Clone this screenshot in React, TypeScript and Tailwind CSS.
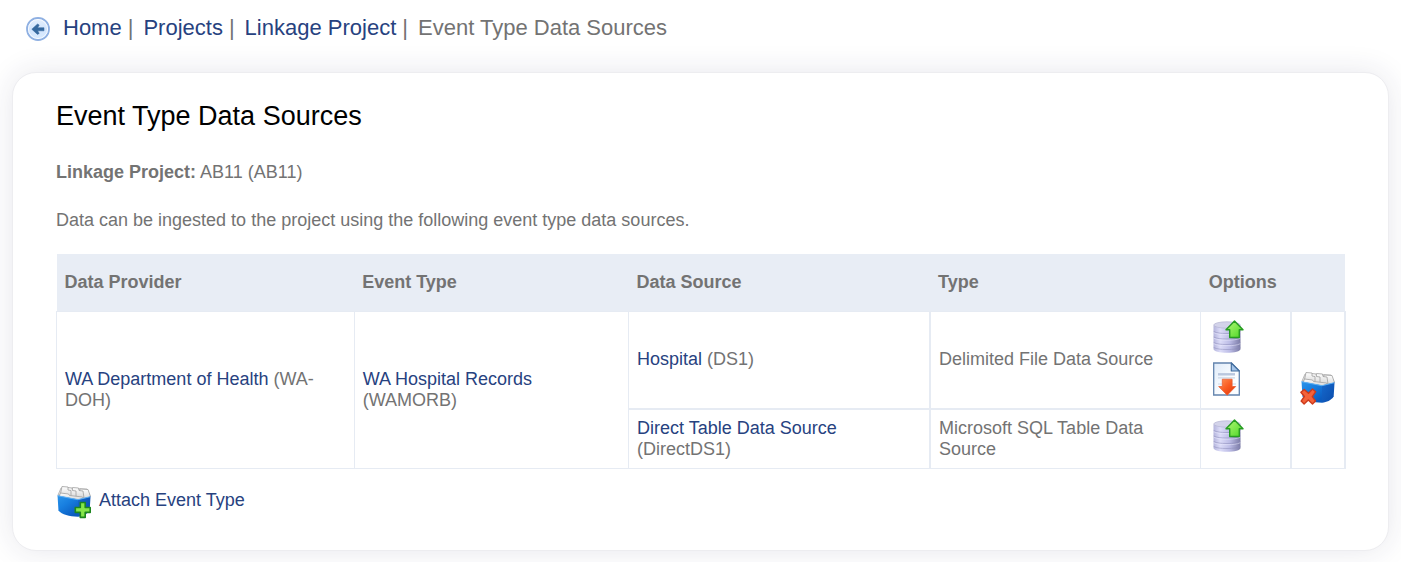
import React from "react";

const link = "text-[#27427f] hover:underline";
const cell = "border border-[#e6ebf3] px-2 py-2 text-left align-middle";

function BackIcon() {
  return (
    <svg viewBox="0 0 24 24" className="size-6" aria-hidden="true">
      <defs>
        <linearGradient id="back-fill" x1="0" y1="0" x2="0" y2="1">
          <stop offset="0" stopColor="#e6f0fd" />
          <stop offset="0.5" stopColor="#d3e5fd" />
          <stop offset="1" stopColor="#d9ebff" />
        </linearGradient>
      </defs>
      <circle cx="12" cy="12" r="11" fill="url(#back-fill)" stroke="#8fb0e2" strokeWidth="1.8" />
      <circle cx="12" cy="12" r="9.6" fill="none" stroke="#fff" strokeOpacity="0.8" />
      <path d="M5.800 12.200 11.500 7l1.700 1-1.500 2.700H18v3.100h-6.300l1.500 2.600-1.700 1z" fill="#36699f" stroke="#36699f" strokeWidth="0.5" strokeLinejoin="round" />
    </svg>
  );
}

function DatabaseUploadIcon() {
  return (
    <svg viewBox="0 0 34 34" className="size-[34px]" aria-hidden="true">
      <defs>
        <linearGradient id="db-side" x1="0" y1="0" x2="1" y2="0">
          <stop offset="0" stopColor="#b4b4dc" />
          <stop offset="0.25" stopColor="#dcdcf8" />
          <stop offset="0.6" stopColor="#bcbce6" />
          <stop offset="1" stopColor="#7b7ba6" />
        </linearGradient>
        <linearGradient id="db-arrow" x1="0" y1="0" x2="1" y2="1">
          <stop offset="0" stopColor="#b4fa78" />
          <stop offset="1" stopColor="#4bd524" />
        </linearGradient>
      </defs>
      <path d="M1.500 5.500V29c0 2.300 6 3.700 13.500 3.700S28.500 31.300 28.500 29V5.500z" fill="url(#db-side)" />
      <ellipse cx="15" cy="5" rx="13.300" ry="3.200" fill="#d3d3ea" stroke="#b4b4d2" strokeWidth="0.7" />
      <g fill="none" stroke="#8a8ab8" strokeWidth="1" opacity="0.5">
        <path d="M1.700 11.500c3 1.500 7 2 13.300 2s10.300-.5 13.300-2" />
        <path d="M1.700 17c3 1.500 7 2 13.300 2s10.300-.5 13.300-2" />
        <path d="M1.700 22.500c3 1.500 7 2 13.300 2s10.300-.5 13.300-2" />
        <path d="M1.700 27.500c3 1.500 7 2 13.300 2s10.300-.5 13.300-2" />
      </g>
      <g fill="none" stroke="#ededff" strokeWidth="1" opacity="0.5">
        <path d="M1.700 12.700c3 1.500 7 2 13.300 2s10.300-.5 13.300-2" />
        <path d="M1.700 18.200c3 1.500 7 2 13.300 2s10.300-.5 13.300-2" />
        <path d="M1.700 23.700c3 1.500 7 2 13.300 2s10.300-.5 13.300-2" />
      </g>
      <path d="M22.500 1 31 9.700h-3.700v7.800h-9.600V9.700H14z" fill="url(#db-arrow)" stroke="#279c22" strokeWidth="1.400" strokeLinejoin="round" />
    </svg>
  );
}

function FileDownloadIcon() {
  return (
    <svg viewBox="0 0 34 34" className="size-[34px]" aria-hidden="true">
      <defs>
        <linearGradient id="page-fill" x1="0" y1="0" x2="1" y2="1">
          <stop offset="0" stopColor="#dfebf9" />
          <stop offset="0.6" stopColor="#fbfdff" />
        </linearGradient>
        <linearGradient id="page-arrow" x1="0" y1="0" x2="1" y2="1">
          <stop offset="0" stopColor="#ff9457" />
          <stop offset="0.5" stopColor="#f95920" />
          <stop offset="1" stopColor="#dc3508" />
        </linearGradient>
      </defs>
      <path d="M1.700 1h17.600l8 8v24H1.700z" fill="url(#page-fill)" stroke="#6283ad" strokeWidth="1.300" />
      <path d="M19.300 1v8h8z" fill="#a4c4e9" stroke="#446f9f" strokeWidth="1.200" strokeLinejoin="round" />
      <path d="M6 12.300h17" stroke="#b9c7de" strokeWidth="2.400" />
      <path d="M6 15.800h17M6 22h4M20 22h4" stroke="#ccd7e8" strokeWidth="1.200" />
      <path d="M10.300 17.200h9.800v7.300h3.600L15.200 33.200 6.700 24.500h3.600z" fill="url(#page-arrow)" stroke="#e85d32" strokeWidth="0.8" strokeLinejoin="round" />
    </svg>
  );
}

function BoxIcon({ badge }: { badge: "add" | "remove" }) {
  return (
    <svg viewBox="0 0 36 34" className="h-[34px] w-9" aria-hidden="true">
      <defs>
        <linearGradient id="box-front" x1="0" y1="0" x2="0.700" y2="1">
          <stop offset="0" stopColor="#2b94ea" />
          <stop offset="0.45" stopColor="#187fe0" />
          <stop offset="1" stopColor="#0b5cc0" />
        </linearGradient>
        <linearGradient id="box-end" x1="0" y1="0" x2="1" y2="1">
          <stop offset="0" stopColor="#1568cc" />
          <stop offset="1" stopColor="#0a4cab" />
        </linearGradient>
        <linearGradient id="box-paper" x1="0" y1="0" x2="0" y2="1">
          <stop offset="0" stopColor="#fff" />
          <stop offset="1" stopColor="#d6d6d6" />
        </linearGradient>
      </defs>
      <path d="M2 10 5 3l26 1 3 7-12 4z" fill="#e4e4e4" stroke="#a5a5a5" strokeWidth="0.7" />
      <g fill="url(#box-paper)" stroke="#a0a0a0" strokeWidth="0.8">
        <path d="m22 13 2-9 8 .5 2.500 7-6 3z" />
        <path d="m15 12 1.500-9.500 6 .5.500 2.500 4 .5 1 7z" />
        <path d="M10 11 11 2.500l5 .5.500 2.500 3.500.5v7z" />
        <path d="M4 11 6 1.500l6 .5v3l3 .5v7z" />
        <path d="M3 11.500 4.500 8l8 1 1 1.500 13 1.500 1 2-6 .8z" />
      </g>
      <path d="m1.500 10.500 20.500 4v17.200C13 31.500 6 29.500 2.500 25.500z" fill="url(#box-front)" />
      <path d="m22 14.500 12.500-3-.8 14c-2.700 4-7 5.700-11.700 6.200z" fill="url(#box-end)" />
      <path d="m1.500 10.700 20.500 4 12.300-3" fill="none" stroke="#5db0f5" strokeWidth="1" />
      {badge === "add" ? (
        <path d="M24.300 17.500h4.900v5h5v4.900h-5v5h-4.900v-5h-5v-4.900h5z" fill="#86e64a" stroke="#1d861f" strokeWidth="1.600" strokeLinejoin="round" />
      ) : (
        <path d="m4.200 18.500 4.300 3.700 4-4.200 3.200 2.700-3.400 5 3.200 4.300-3 2.900-4.200-3.900-4.200 4-3-2.900 3.300-4.600-3.500-4.300z" fill="#f4623a" stroke="#cc3a1c" strokeWidth="1.400" strokeLinejoin="round" />
      )}
    </svg>
  );
}

function Separator() {
  return <span aria-hidden="true" className="ml-[6px] mr-[10px]">|</span>;
}

export default function App() {
  return (
    <div className="bg-white px-3 pb-3 font-['Liberation_Sans',Arial,sans-serif] text-[18px] leading-[21px] text-[#737373]">
      <nav aria-label="Breadcrumb" className="flex h-[72px] items-start pl-[14px] pt-[14px] text-[22px] leading-7">
        <a href="#back" aria-label="Back" className="mr-[13px] mt-[3px] shrink-0">
          <BackIcon />
        </a>
        <a href="#home" className={link}>Home</a>
        <Separator />
        <a href="#projects" className={link}>Projects</a>
        <Separator />
        <a href="#linkage-project" className={link}>Linkage Project</a>
        <Separator />
        <span aria-current="page">Event Type Data Sources</span>
      </nav>

      <main className="rounded-[24px] border border-[#ededf0] bg-white pb-[26px] pl-[43px] pr-[42px] pt-[27px] shadow-[0_0_30px_rgba(40,40,80,0.11)]">
        <h1 className="text-[27px] leading-8 text-black">Event Type Data Sources</h1>
        <p className="mt-[30px]">
          <strong>Linkage Project:</strong> AB11 (AB11)
        </p>
        <p className="mt-[27px]">
          Data can be ingested to the project using the following event type data sources.
        </p>

        <table className="mt-[23px] w-full table-fixed border-collapse">
          <colgroup>
            <col className="w-[23.1%]" />
            <col className="w-[21.3%]" />
            <col className="w-[23.4%]" />
            <col className="w-[21%]" />
            <col className="w-[7%]" />
            <col className="w-[4.200%]" />
          </colgroup>
          <thead>
            <tr className="h-[57px] bg-[#e8edf5]">
              <th scope="col" className="px-2 text-left">Data Provider</th>
              <th scope="col" className="px-2 text-left">Event Type</th>
              <th scope="col" className="px-2 text-left">Data Source</th>
              <th scope="col" className="px-2 text-left">Type</th>
              <th scope="col" colSpan={2} className="px-2 text-left">Options</th>
            </tr>
          </thead>
          <tbody>
            <tr>
              <td rowSpan={2} className={cell}>
                <a href="#wa-doh" className={link}>WA Department of Health</a> (WA-DOH)
              </td>
              <td rowSpan={2} className={cell}>
                <a href="#wamorb" className={link}>WA Hospital Records</a> (WAMORB)
              </td>
              <td className={`${cell} border-b-2 border-r-2`}>
                <a href="#ds1" className={link}>Hospital</a> (DS1)
              </td>
              <td className={`${cell} border-b-2`}>Delimited File Data Source</td>
              <td className={`${cell} border-b-2 border-r-2`}>
                <div className="flex flex-col gap-2 pb-1 pl-[3px]">
                  <button type="button" aria-label="Upload to Hospital" className="size-[34px] cursor-pointer">
                    <DatabaseUploadIcon />
                  </button>
                  <button type="button" aria-label="Download Hospital file" className="size-[34px] cursor-pointer">
                    <FileDownloadIcon />
                  </button>
                </div>
              </td>
              <td rowSpan={2} className="border border-r-2 border-[#e6ebf3] pb-1 pl-2 align-middle">
                <button type="button" aria-label="Detach event type" className="block cursor-pointer">
                  <BoxIcon badge="remove" />
                </button>
              </td>
            </tr>
            <tr>
              <td className={`${cell} border-r-2`}>
                <a href="#direct-ds1" className={link}>Direct Table Data Source</a> (DirectDS1)
              </td>
              <td className={cell}>Microsoft SQL Table Data Source</td>
              <td className={`${cell} border-r-2`}>
                <div className="pb-[5px] pl-[3px]">
                  <button type="button" aria-label="Upload to Direct Table Data Source" className="block size-[34px] cursor-pointer">
                    <DatabaseUploadIcon />
                  </button>
                </div>
              </td>
            </tr>
          </tbody>
        </table>

        <a href="#attach" className={`mt-4 inline-flex items-start gap-[7px] ${link}`}>
          <BoxIcon badge="add" />
          <span className="mt-[5px]">Attach Event Type</span>
        </a>
      </main>
    </div>
  );
}
